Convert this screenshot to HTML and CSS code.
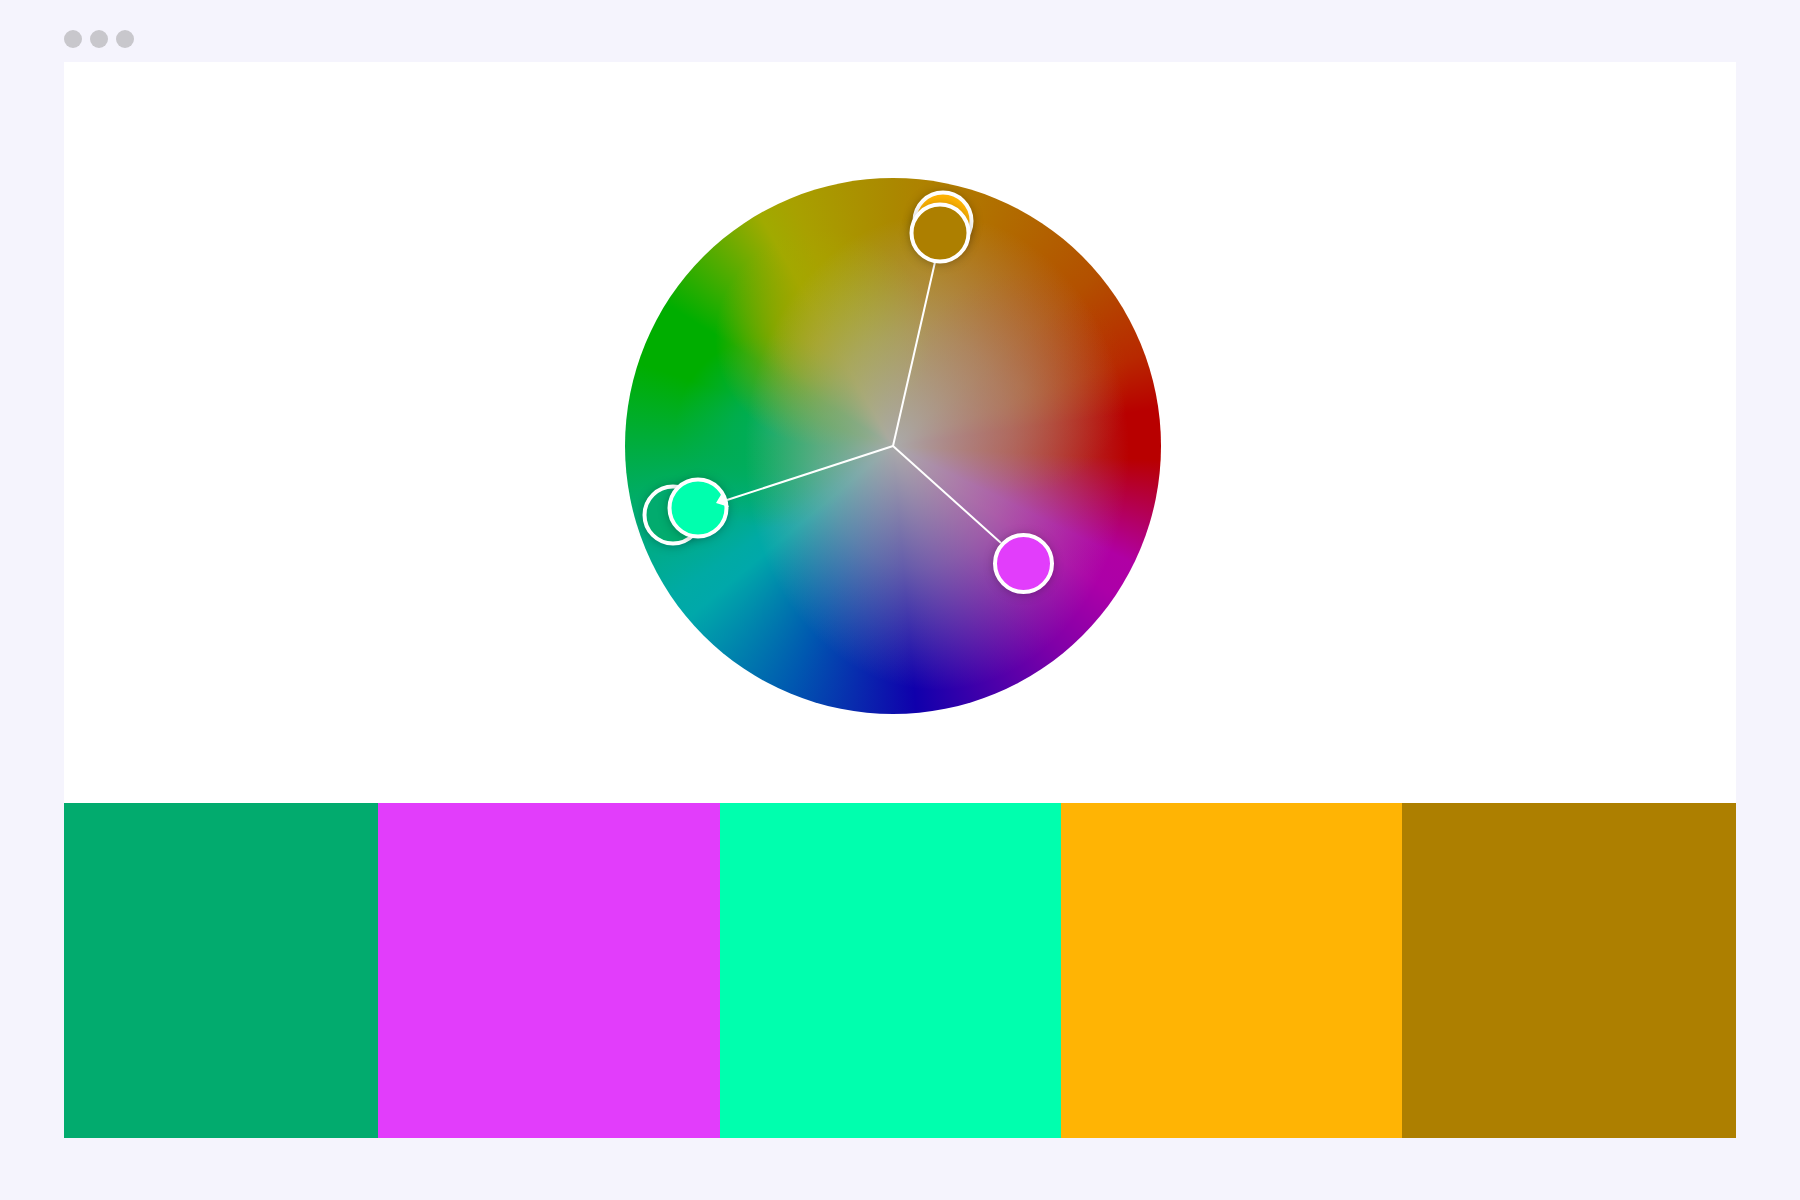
FILE: index.html
```html
<!DOCTYPE html>
<html lang="en">
<head>
    <meta charset="UTF-8">
    <meta name="viewport" content="width=device-width, initial-scale=1.0">
    <title>Color Wheel</title>
    <link rel="stylesheet" href="styles.css">
</head>
<body>
    <header class="window-bar">
        <span class="dot"></span>
        <span class="dot"></span>
        <span class="dot"></span>
    </header>

    <main class="window">
        <section class="stage">
            <div class="wheel">
                <svg class="wheel-overlay" viewBox="0 0 536 536" aria-hidden="true">
                    <defs>
                        <!-- gray center, reaches full saturation sooner on the left -->
                        <radialGradient id="desaturate" gradientUnits="userSpaceOnUse" cx="0" cy="0" r="1" fx="-0.22" fy="-0.02" gradientTransform="translate(312 274) scale(192 238)">
                            <stop offset="0" stop-color="#aaa"/>
                            <stop offset="0.5" stop-color="#aaa" stop-opacity="0.54"/>
                            <stop offset="0.85" stop-color="#aaa" stop-opacity="0.16"/>
                            <stop offset="1" stop-color="#aaa" stop-opacity="0"/>
                        </radialGradient>
                        <!-- hues bend toward teal, olive and brown inside the rim -->
                        <radialGradient id="teal">
                            <stop offset="0" stop-color="#00ad5c"/>
                            <stop offset="0.4" stop-color="#00ad5c" stop-opacity="0.75"/>
                            <stop offset="1" stop-color="#00ad5c" stop-opacity="0"/>
                        </radialGradient>
                        <radialGradient id="brown">
                            <stop offset="0" stop-color="#b25010" stop-opacity="0.7"/>
                            <stop offset="1" stop-color="#b25010" stop-opacity="0"/>
                        </radialGradient>
                        <radialGradient id="olive">
                            <stop offset="0" stop-color="#a8a400"/>
                            <stop offset="0.4" stop-color="#a8a400" stop-opacity="0.7"/>
                            <stop offset="1" stop-color="#a8a400" stop-opacity="0"/>
                        </radialGradient>
                    </defs>
                    <circle cx="146" cy="254" r="96" fill="url(#teal)"/>
                    <circle cx="198" cy="160" r="108" fill="url(#olive)"/>
                    <circle cx="394" cy="206" r="110" fill="url(#brown)"/>
                    <circle cx="268" cy="268" r="268" fill="url(#desaturate)"/>

                    <g class="spokes">
                        <path d="M268 268 310 84"/>
                        <path d="M268 268 102 322"/>
                        <path d="M268 268 376 365"/>
                    </g>

                    <g class="handles">
                        <circle cx="318" cy="43" r="28.5" fill="#ffb404"/>
                        <circle cx="315" cy="55" r="28.5" fill="#ad7f00"/>
                        <circle cx="48" cy="337" r="28.5" fill="#02ab6e"/>
                        <circle cx="73" cy="330" r="28.5" fill="#00ffae"/>
                        <circle cx="398.5" cy="385.5" r="28.5" fill="#e23dfb"/>
                    </g>
                    <path class="base-marker" d="M91 325 97 315 104 329z"/>
                </svg>
            </div>
        </section>

        <section class="palette">
            <div class="swatch-green"></div>
            <div class="swatch-magenta"></div>
            <div class="swatch-mint"></div>
            <div class="swatch-orange"></div>
            <div class="swatch-brown"></div>
        </section>
    </main>
</body>
</html>
```

FILE: styles.css
```css
* {
    box-sizing: border-box;
}

body {
    display: flex;
    flex-direction: column;
    min-height: 100vh;
    margin: 0;
    padding: 0 64px 62px;
    font-family: "Open Sans", sans-serif;
    background-color: #f5f4fd;
}

.window-bar {
    display: flex;
    gap: 8px;
    padding: 30px 0 14px;
}

.dot {
    width: 18px;
    height: 18px;
    border-radius: 50%;
    background-color: #c8c7cc;
}

.window {
    display: flex;
    flex: 1;
    flex-direction: column;
    background-color: #fff;
}

.stage {
    display: flex;
    flex: 1;
    justify-content: center;
    align-items: center;
    padding: 27px 14px 0 0;
}

.wheel {
    flex: 0 1 536px;
    border-radius: 50%;
    background: conic-gradient(
        #ab8800 0deg,
        #b07c00 12deg,
        #b35000 50deg,
        #b82800 70deg,
        #b80000 82deg,
        #b80000 93deg,
        #b000a4 116deg,
        #ac00a8 124deg,
        #8000a8 141deg,
        #1000ac 175deg,
        #0058b0 203deg,
        #00a8aa 230deg,
        #00aaa4 236deg,
        #00ac70 256deg,
        #00ae00 288deg,
        #00ae00 302deg,
        #a0aa00 330deg,
        #a8a000 338deg,
        #ab8800 360deg
    );
}

.wheel-overlay {
    display: block;
    width: 100%;
    overflow: visible;
}

.spokes {
    fill: none;
    stroke: #fff;
    stroke-width: 2;
}

.handles circle {
    stroke: #fff;
    stroke-width: 4;
    filter: drop-shadow(0 1px 5px rgba(0, 0, 0, 0.25));
}

.base-marker {
    fill: #fff;
}

.palette {
    display: grid;
    grid-template-columns: 314fr 342fr 341fr 341fr 334fr;
    height: 335px;
}

.swatch-green {
    background-color: #02ab6e;
}

.swatch-magenta {
    background-color: #e23dfb;
}

.swatch-mint {
    background-color: #00ffae;
}

.swatch-orange {
    background-color: #ffb404;
}

.swatch-brown {
    background-color: #ad7f00;
}
```
